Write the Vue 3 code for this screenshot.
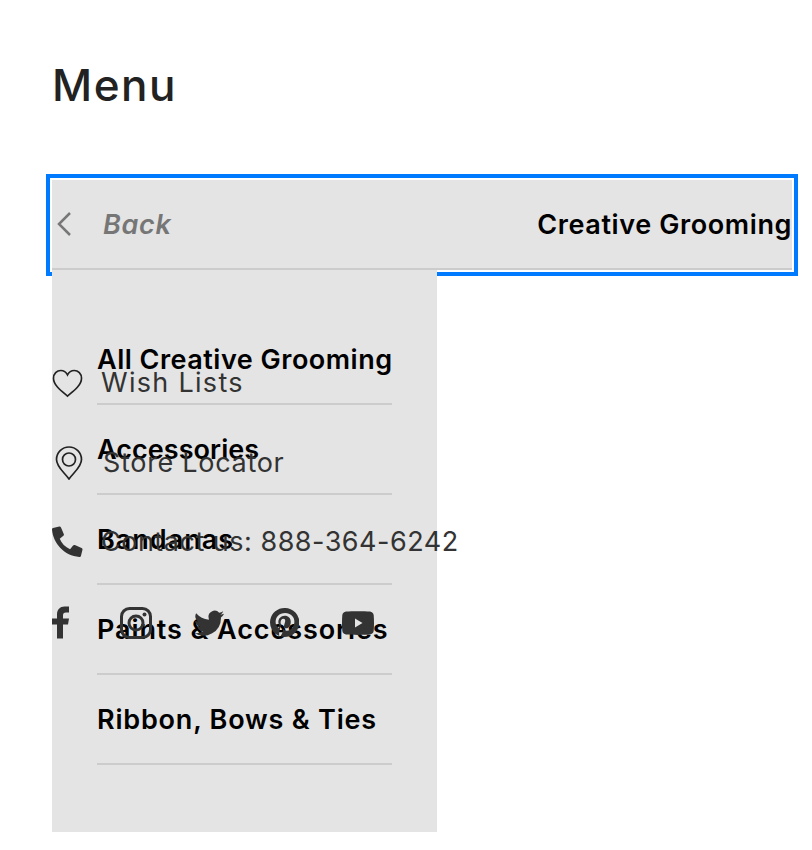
<template>
  <main class="page">
    <h1 class="title">Menu</h1>

    <div class="back-bar">
      <svg class="chevron" viewBox="0 0 16 26" aria-hidden="true">
        <path d="M14 2 3 13l11 11" />
      </svg>
      <em class="back">Back</em>
      <strong class="current">Creative Grooming</strong>
    </div>

    <div class="stack">
      <ul class="submenu">
        <li v-for="item in items" :key="item.label">
          <a class="submenu-link" :style="{ letterSpacing: item.spacing + 'px' }">{{ item.label }}</a>
        </li>
      </ul>

      <div class="utility">
        <a class="util-row wish">
          <svg class="i-heart" viewBox="0 0 32 30" aria-hidden="true">
            <path d="M16 28C10 23 1.500 17 1.500 9.500 1.500 5 5 1.500 9 1.500c3 0 5.500 1.500 7 4.500 1.500-3 4-4.500 7-4.500 4 0 7.500 3.500 7.500 8 0 7.500-8.500 13.500-14.500 18.500Z" />
          </svg>
          <span>Wish Lists</span>
        </a>
        <a class="util-row store">
          <svg class="i-pin" viewBox="0 0 28 34" aria-hidden="true">
            <path d="M14 33C9 26 1.500 21 1.500 13.500a12.500 12.500 0 0 1 25 0C26.500 21 19 26 14 33Z" />
            <circle cx="14" cy="13.500" r="6.500" />
          </svg>
          <span>Store Locator</span>
        </a>
        <a class="util-row contact">
          <svg class="i-phone" viewBox="0 0 30 30" aria-hidden="true">
            <path d="M7 0.500 1 2C0.300 2.200 0 2.800 0 3.500 1 17 12 29 26.500 30c.7 0 1.300-.4 1.500-1l1.500-6c.2-.7-.2-1.400-.9-1.700l-6.500-2.800c-.6-.3-1.300-.1-1.700.4l-2.900 3.500C12.800 20.300 9.300 16.800 7.500 12.300L11 9.400c.5-.4.700-1.100.4-1.700L8.700 1.400C8.400.700 7.700.300 7 .500Z" />
          </svg>
          <span>Contact us: 888-364-6242</span>
        </a>
        <div class="social">
          <svg class="i-fb" viewBox="0 0 18 32" aria-hidden="true">
            <path d="M5 32V18H0v-6h5V8c0-5 3-8 7.500-8H17v6h-3c-2.200 0-3 1-3 3v3h6l-1 6h-5v14Z" />
          </svg>
          <svg class="i-ig" viewBox="0 0 32 32" aria-hidden="true">
            <rect x="1.500" y="1.500" width="29" height="29" rx="8" />
            <circle cx="16" cy="16" r="7" />
            <circle class="dot" cx="24.500" cy="7.500" r="2" />
          </svg>
          <svg class="i-tw" viewBox="0 0 32 26" aria-hidden="true">
            <path d="M32 3.100c-1.200.5-2.400.9-3.800 1C29.600 3.300 30.600 2 31.100.5c-1.300.8-2.700 1.300-4.200 1.600A6.500 6.500 0 0 0 15.700 8c0 .5.100 1 .2 1.500C10.500 9.200 5.600 6.600 2.300 2.600a6.600 6.600 0 0 0 2 8.800c-1.100 0-2.100-.3-3-.8 0 3.200 2.300 5.900 5.300 6.500-1 .3-2 .3-3 .1.800 2.600 3.300 4.500 6.100 4.600A13.200 13.200 0 0 1 0 23.500 18.600 18.600 0 0 0 28.700 7c1.300-.9 2.400-2.100 3.300-3.900Z" />
          </svg>
          <svg class="i-pt" viewBox="0 0 32 32" aria-hidden="true">
            <path fill-rule="evenodd" d="M16 0a16 16 0 0 0-5.800 30.900c-.1-1.300-.3-3.200.1-4.600l1.900-8c-.5-1-.5-2-.5-2.500 0-2.300 1.300-4 3-4 1.400 0 2.100 1 2.100 2.300 0 1.400-.9 3.500-1.300 5.400-.4 1.600.8 2.900 2.400 2.900 2.800 0 5-3 5-7.300 0-3.800-2.700-6.500-6.600-6.500-4.500 0-7.100 3.400-7.100 6.800 0 1.400.5 2.800 1.200 3.600.1.200.1.300.1.500l-.5 1.900c-.1.300-.3.400-.6.300-2-.9-3.200-3.900-3.200-6.300 0-5.100 3.700-9.800 10.700-9.800 5.600 0 10 4 10 9.400 0 5.600-3.500 10.100-8.400 10.100-1.700 0-3.200-.9-3.800-1.900l-1 3.900c-.4 1.400-1.300 3.100-2 4.200A16 16 0 1 0 16 0Z" />
          </svg>
          <svg class="i-yt" viewBox="0 0 32 24" aria-hidden="true">
            <path fill-rule="evenodd" d="M4 0.500C10 0 22 0 28 .5c2 .2 3.500 1.700 3.700 3.700.4 4.500.4 11 0 15.600-.2 2-1.700 3.500-3.700 3.700-6 .5-18 .5-24 0-2-.2-3.500-1.700-3.700-3.700C-.1 15.300-.1 8.700.3 4.200.5 2.200 2 .7 4 .5ZM13 7.500v9l7.500-4.500Z" />
          </svg>
        </div>
      </div>
    </div>
  </main>
</template>

<script setup>
// spacing evens out the width of each label against the original typeface
const items = [
  { label: 'All Creative Grooming', spacing: 0.5 },
  { label: 'Accessories', spacing: 0.05 },
  { label: 'Bandanas', spacing: 1 },
  { label: 'Paints & Accessories', spacing: 0.9 },
  { label: 'Ribbon, Bows & Ties', spacing: 0.8 },
]
</script>

<style>
body {
  background: #fff;
}
</style>

<style scoped>
* {
  box-sizing: border-box;
}
.page {
  width: 812px;
  padding: 56px 20px 18px 52px;
  font-family: "Inter", "Liberation Sans", sans-serif;
  color: #000;
}
.title {
  margin: 0 0 66px;
  height: 58px;
  font-size: 44px;
  line-height: 58px;
  font-weight: 500;
  letter-spacing: 1.500px;
  color: #222;
}
.back-bar {
  display: flex;
  align-items: center;
  height: 90px;
  background: #e4e4e4;
  border-bottom: 2px solid #ccc;
  box-shadow: 0 0 0 2px #fff, 0 0 0 6px #007aff;
}
.chevron {
  width: 16px;
  height: 26px;
  margin: 0 0 0 4px;
  fill: none;
  stroke: #777;
  stroke-width: 2.500;
}
.back {
  margin-left: 31px;
  font-size: 27px;
  font-weight: 600;
  letter-spacing: .7px;
  color: #767676;
}
.current {
  margin-left: auto;
  font-size: 27px;
  font-weight: 600;
  letter-spacing: .6px;
  white-space: nowrap;
}
.stack {
  display: grid;
  grid-template-columns: 385px;
}
.stack > * {
  grid-area: 1 / 1;
  min-width: 0;
}
.submenu {
  list-style: none;
  margin: 0;
  padding: 45px 45px 67px;
  background: #e4e4e4;
}
.submenu li {
  height: 90px;
  border-bottom: 2px solid #ccc;
}
.submenu-link {
  display: block;
  font-size: 27px;
  line-height: 90px;
  font-weight: 600;
  white-space: nowrap;
}
.utility {
  display: flex;
  flex-direction: column;
  padding-top: 98px;
  color: #333;
}
.util-row {
  display: flex;
  align-items: center;
  height: 30px;
  font-size: 27px;
  white-space: nowrap;
}
.util-row svg {
  flex: none;
  fill: none;
  stroke: #222;
  stroke-width: 1.700;
}
.wish,
.store {
  padding-bottom: 2px;
}
.wish svg,
.store svg {
  margin-bottom: -2px;
}
.wish {
  gap: 18px;
  letter-spacing: 1.300px;
}
.i-heart {
  width: 31px;
  height: 29px;
}
.store {
  gap: 20px;
  margin: 50px 0 0 3px;
  letter-spacing: .7px;
}
.i-pin {
  width: 28px;
  height: 34px;
}
.contact {
  gap: 18px;
  margin-top: 48px;
  letter-spacing: .5px;
}
.util-row .i-phone {
  width: 31px;
  height: 31px;
  fill: #333;
  stroke: none;
}
.social {
  display: flex;
  align-items: center;
  margin-top: 50px;
}
.social svg {
  flex: none;
  fill: #333;
}
.i-fb {
  width: 18px;
  height: 33px;
  margin-right: 50px;
}
.social .i-ig {
  width: 32px;
  height: 32px;
  margin-right: 42px;
  fill: none;
  stroke: #333;
  stroke-width: 3;
}
.i-ig .dot {
  fill: #333;
  stroke: none;
}
.i-tw {
  width: 30px;
  height: 26px;
  margin-right: 46px;
}
.i-pt {
  width: 29px;
  height: 29px;
  margin-right: 43px;
}
.i-yt {
  width: 32px;
  height: 24px;
}
</style>
